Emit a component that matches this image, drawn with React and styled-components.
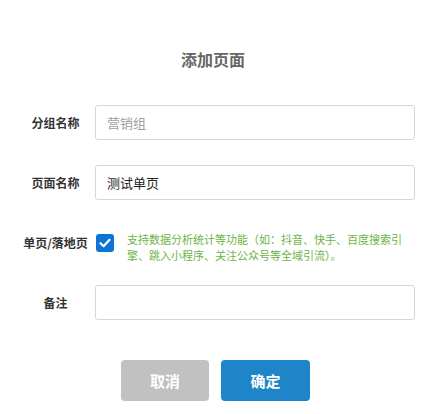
import styled, { createGlobalStyle } from 'styled-components';

const GlobalStyle = createGlobalStyle`
  body {
    margin: 0;
    background: #fff;
    font-family: "Noto Sans CJK SC", "Noto Sans", "Liberation Sans", sans-serif;
  }
`;

const Dialog = styled.div`
  width: 426px;
  height: 414px;
  display: flex;
  flex-direction: column;
  padding-top: 49px;
  box-sizing: border-box;
`;

const Title = styled.h2`
  margin: 0 0 36px;
  font-size: 16px;
  line-height: 20px;
  font-weight: bold;
  color: #666;
  text-align: center;
`;

const Form = styled.div`
  display: flex;
  flex-direction: column;
  padding: 0 11px 0 16px;
`;

const Row = styled.div`
  display: grid;
  grid-template-columns: 79px 320px;
  align-items: ${(p) => (p.$top ? 'start' : 'center')};
  margin-bottom: ${(p) => p.$gap || 0}px;
`;

const Label = styled.label`
  font-size: 12px;
  line-height: 24px;
  font-weight: bold;
  color: #333;
  text-align: center;
`;

const Input = styled.input`
  box-sizing: border-box;
  width: 320px;
  height: 35px;
  padding: 0 11px;
  border: 1px solid #d6d6d6;
  border-radius: 3px;
  font-family: inherit;
  font-size: 13px;
  color: #222;
  outline: none;
  &::placeholder {
    color: #a0a0a0;
  }
`;

const CheckLine = styled.div`
  display: flex;
  align-items: flex-start;
  gap: 13px;
`;

const Box = styled.span`
  flex: none;
  width: 18px;
  height: 18px;
  margin: 3px 0 0 1px;
  border-radius: 3px;
  background: #0b75d7;
  display: flex;
  align-items: center;
  justify-content: center;
`;

const Hint = styled.p`
  margin: 0;
  width: 276px;
  font-size: 11px;
  line-height: 16px;
  color: #6db447;
`;

const Actions = styled.div`
  display: flex;
  justify-content: center;
  gap: 12px;
  padding-left: 5px;
  margin-top: 40px;
`;

const Button = styled.button`
  width: ${(p) => p.$w}px;
  height: 41px;
  border: none;
  border-radius: 4px;
  background: ${(p) => (p.$primary ? '#1e86c8' : '#c1c1c1')};
  color: #fff;
  font-family: inherit;
  font-size: 15px;
  font-weight: bold;
`;

export default function App() {
  return (
    <Dialog>
      <GlobalStyle />
      <Title>添加页面</Title>
      <Form>
        <Row $gap={25}>
          <Label>分组名称</Label>
          <Input placeholder='营销组' />
        </Row>
        <Row $gap={31}>
          <Label>页面名称</Label>
          <Input defaultValue='测试单页' />
        </Row>
        <Row $top $gap={22}>
          <Label>单页/落地页</Label>
          <CheckLine>
            <Box>
              <svg width='12' height='10' viewBox='0 0 12 10'>
                <path
                  d='M1.5 5.2 L4.6 8.2 L10.5 1.8'
                  fill='none'
                  stroke='#fff'
                  strokeWidth='2.2'
                  strokeLinecap='round'
                  strokeLinejoin='round'
                />
              </svg>
            </Box>
            <Hint>
              支持数据分析统计等功能（如：抖音、快手、百度搜索引擎、跳入小程序、关注公众号等全域引流）。
            </Hint>
          </CheckLine>
        </Row>
        <Row>
          <Label>备注</Label>
          <Input />
        </Row>
      </Form>
      <Actions>
        <Button $w={88}>取消</Button>
        <Button $w={89} $primary>
          确定
        </Button>
      </Actions>
    </Dialog>
  );
}
